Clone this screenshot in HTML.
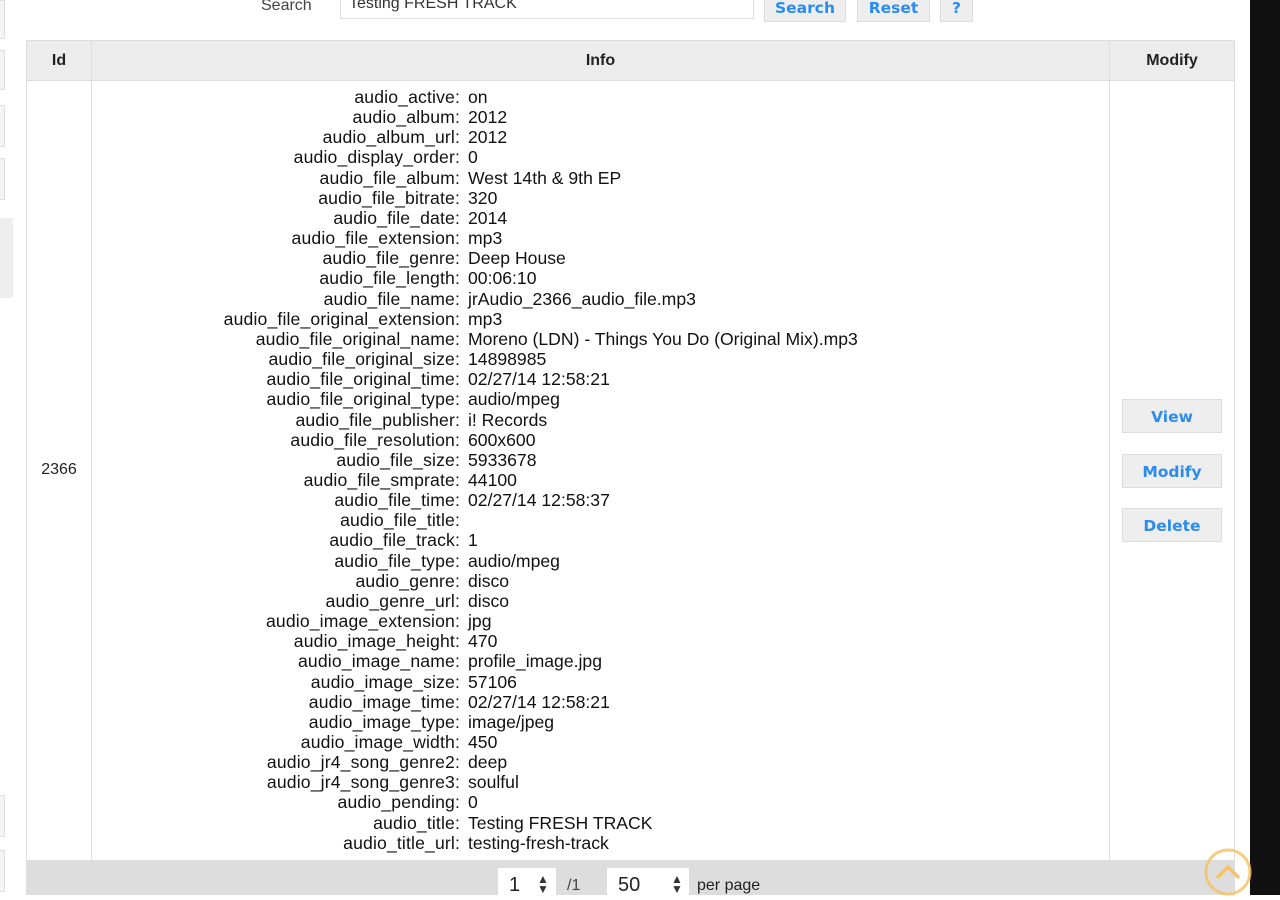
<!DOCTYPE html><html><head><style>
body{margin:0;width:1280px;height:895px;overflow:hidden;background:#fff;font-family:"Liberation Sans",Arial,sans-serif;position:relative}
.abs{position:absolute}
.lb{position:absolute;left:0;width:4px;border:1px solid #ddd;border-left:none;background:#f4f4f4}
.btn{position:absolute;background:#eee;border:1px solid #ddd;color:#2a8cf0;font-weight:bold;font-size:15.5px;font-family:"DejaVu Sans",Verdana,sans-serif;text-align:center;box-sizing:border-box}
.rows{position:absolute;left:92px;top:87px;width:1017px;font-size:17.6px;color:#111}
.r{height:20.17px;line-height:20px;white-space:nowrap}
.k{display:inline-block;width:368px;text-align:right;margin-right:8px;letter-spacing:0.15px}
</style></head><body>
<div class="lb" style="top:0;height:37px"></div>
<div class="lb" style="top:50px;height:38px"></div>
<div class="lb" style="top:105px;height:40px"></div>
<div class="lb" style="top:158px;height:40px"></div>
<div class="abs" style="left:0;top:218px;width:13px;height:80px;background:#eee"></div>
<div class="lb" style="top:795px;height:40px"></div>
<div class="lb" style="top:850px;height:40px"></div>
<div class="abs" style="left:261px;top:-3px;font-size:16px;color:#444">Search</div>
<div class="abs" style="left:340px;top:-6px;width:414px;height:25px;border:1px solid #ddd;font-size:16px;color:#333;padding-left:8px;line-height:18px;box-sizing:border-box">Testing FRESH TRACK</div>
<div class="btn" style="left:764px;top:-6px;width:82px;height:28px;line-height:26px">Search</div>
<div class="btn" style="left:857px;top:-6px;width:73px;height:28px;line-height:26px">Reset</div>
<div class="btn" style="left:940px;top:-6px;width:33px;height:28px;line-height:26px">?</div>
<div class="abs" style="left:26px;top:40px;width:1209px;height:855px;border:1px solid #ddd;box-sizing:border-box"></div>
<div class="abs" style="left:27px;top:41px;width:1207px;height:39px;background:#ececec;border-bottom:1px solid #ddd"></div>
<div class="abs" style="left:91px;top:41px;width:1px;height:819px;background:#ddd"></div>
<div class="abs" style="left:1109px;top:41px;width:1px;height:819px;background:#ddd"></div>
<div class="abs" style="left:27px;top:52px;width:64px;text-align:center;font-weight:bold;font-size:16px;color:#222">Id</div>
<div class="abs" style="left:92px;top:52px;width:1017px;text-align:center;font-weight:bold;font-size:16px;color:#222">Info</div>
<div class="abs" style="left:1110px;top:52px;width:124px;text-align:center;font-weight:bold;font-size:16px;color:#222">Modify</div>
<div class="abs" style="left:27px;top:461px;width:64px;text-align:center;font-size:16px;color:#222">2366</div>
<div class="rows">
<div class="r"><span class="k">audio_active:</span>on</div>
<div class="r"><span class="k">audio_album:</span>2012</div>
<div class="r"><span class="k">audio_album_url:</span>2012</div>
<div class="r"><span class="k">audio_display_order:</span>0</div>
<div class="r"><span class="k">audio_file_album:</span>West 14th &amp; 9th EP</div>
<div class="r"><span class="k">audio_file_bitrate:</span>320</div>
<div class="r"><span class="k">audio_file_date:</span>2014</div>
<div class="r"><span class="k">audio_file_extension:</span>mp3</div>
<div class="r"><span class="k">audio_file_genre:</span>Deep House</div>
<div class="r"><span class="k">audio_file_length:</span>00:06:10</div>
<div class="r"><span class="k">audio_file_name:</span>jrAudio_2366_audio_file.mp3</div>
<div class="r"><span class="k">audio_file_original_extension:</span>mp3</div>
<div class="r"><span class="k">audio_file_original_name:</span>Moreno (LDN) - Things You Do (Original Mix).mp3</div>
<div class="r"><span class="k">audio_file_original_size:</span>14898985</div>
<div class="r"><span class="k">audio_file_original_time:</span>02/27/14 12:58:21</div>
<div class="r"><span class="k">audio_file_original_type:</span>audio/mpeg</div>
<div class="r"><span class="k">audio_file_publisher:</span>i! Records</div>
<div class="r"><span class="k">audio_file_resolution:</span>600x600</div>
<div class="r"><span class="k">audio_file_size:</span>5933678</div>
<div class="r"><span class="k">audio_file_smprate:</span>44100</div>
<div class="r"><span class="k">audio_file_time:</span>02/27/14 12:58:37</div>
<div class="r"><span class="k">audio_file_title:</span></div>
<div class="r"><span class="k">audio_file_track:</span>1</div>
<div class="r"><span class="k">audio_file_type:</span>audio/mpeg</div>
<div class="r"><span class="k">audio_genre:</span>disco</div>
<div class="r"><span class="k">audio_genre_url:</span>disco</div>
<div class="r"><span class="k">audio_image_extension:</span>jpg</div>
<div class="r"><span class="k">audio_image_height:</span>470</div>
<div class="r"><span class="k">audio_image_name:</span>profile_image.jpg</div>
<div class="r"><span class="k">audio_image_size:</span>57106</div>
<div class="r"><span class="k">audio_image_time:</span>02/27/14 12:58:21</div>
<div class="r"><span class="k">audio_image_type:</span>image/jpeg</div>
<div class="r"><span class="k">audio_image_width:</span>450</div>
<div class="r"><span class="k">audio_jr4_song_genre2:</span>deep</div>
<div class="r"><span class="k">audio_jr4_song_genre3:</span>soulful</div>
<div class="r"><span class="k">audio_pending:</span>0</div>
<div class="r"><span class="k">audio_title:</span>Testing FRESH TRACK</div>
<div class="r"><span class="k">audio_title_url:</span>testing-fresh-track</div>
</div>
<div class="btn" style="left:1122px;top:399px;width:100px;height:34px;line-height:34px">View</div>
<div class="btn" style="left:1122px;top:454px;width:100px;height:34px;line-height:34px">Modify</div>
<div class="btn" style="left:1122px;top:508px;width:100px;height:34px;line-height:34px">Delete</div>
<div class="abs" style="left:27px;top:860px;width:1207px;height:35px;background:#ddd"></div>
<div class="abs" style="left:498px;top:868px;width:58px;height:30px;background:#fff"></div>
<div class="abs" style="left:509px;top:874px;font-size:20px;color:#222">1</div>
<div class="abs" style="left:537px;top:874px;font-size:12px;color:#333;line-height:10px">▲<br>▼</div>
<div class="abs" style="left:567px;top:877px;font-size:16px;color:#444">/1</div>
<div class="abs" style="left:607px;top:868px;width:82px;height:30px;background:#fff"></div>
<div class="abs" style="left:618px;top:874px;font-size:20px;color:#222">50</div>
<div class="abs" style="left:671px;top:874px;font-size:12px;color:#333;line-height:10px">▲<br>▼</div>
<div class="abs" style="left:697px;top:877px;font-size:16px;color:#222">per page</div>
<div class="abs" style="left:1250px;top:0;width:30px;height:895px;background:#111"></div>
<svg class="abs" style="left:1200px;top:845px" width="60" height="55"><circle cx="28" cy="27" r="22" fill="none" stroke="#f5c46a" stroke-width="3" opacity=".85"/><path d="M17 33 L28 22 L39 33" fill="none" stroke="#f5c46a" stroke-width="3.5"/></svg>
</body></html>
